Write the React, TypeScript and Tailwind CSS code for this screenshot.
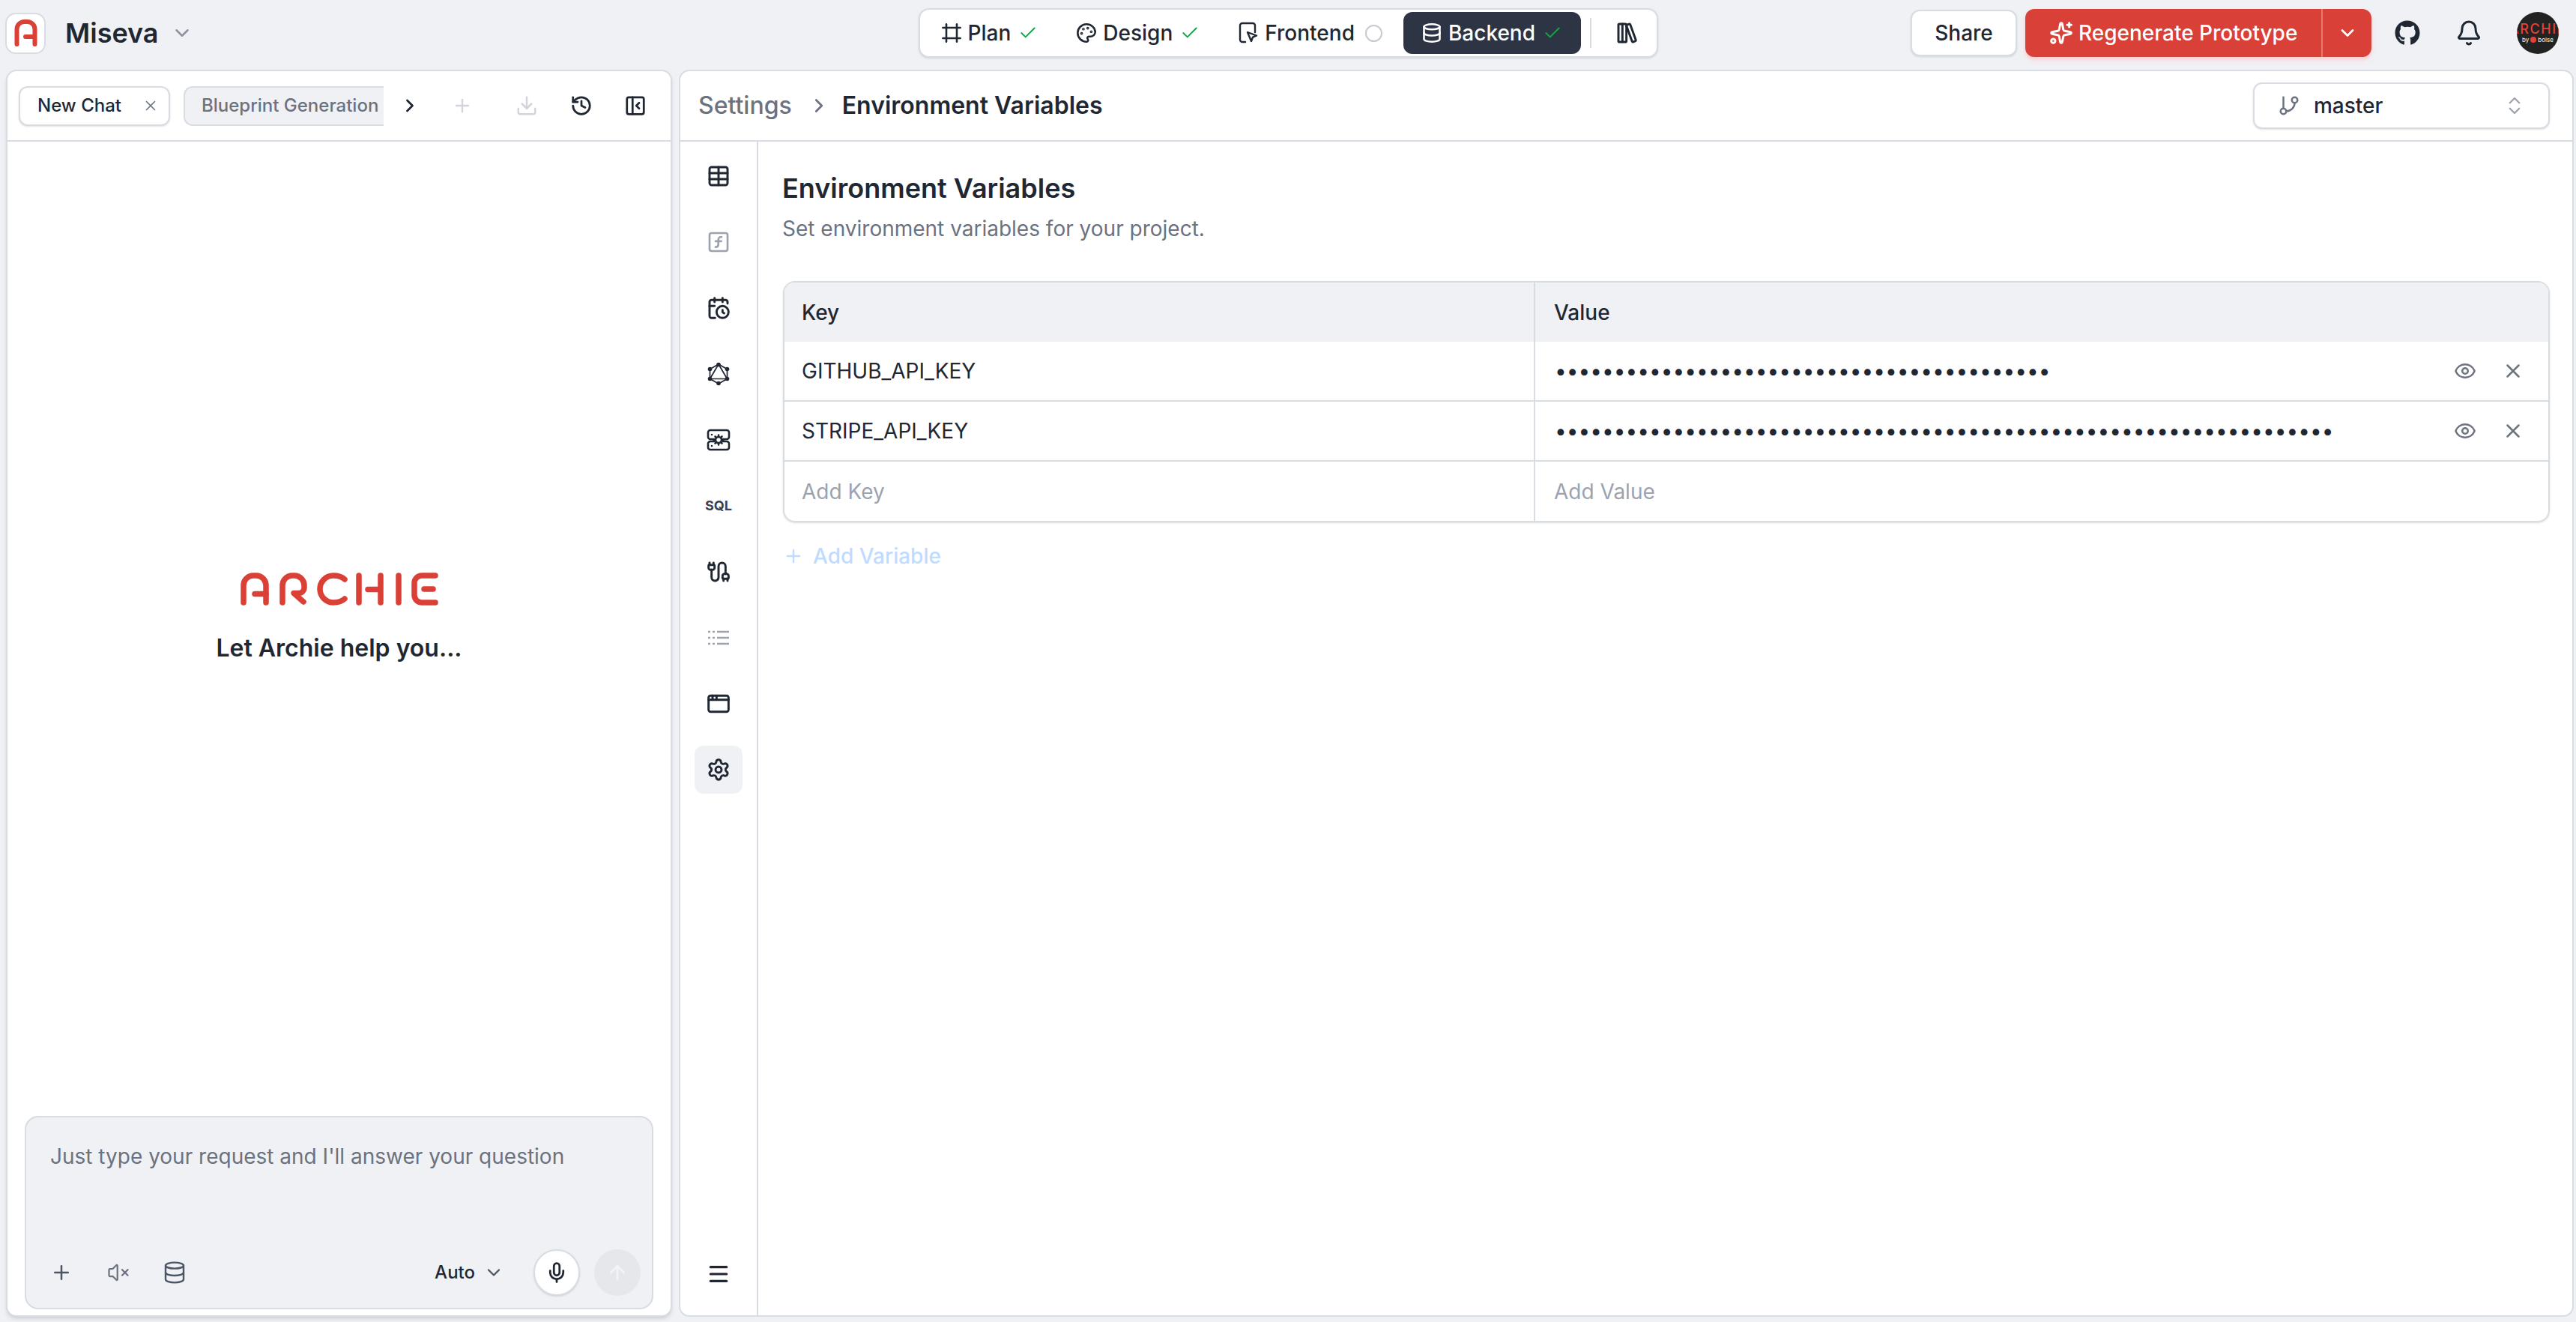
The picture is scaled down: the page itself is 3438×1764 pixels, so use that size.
import {
  AppWindow, ArrowUp, Bell, Cable, CalendarClock, Check, ChevronDown, ChevronRight, ChevronsUpDown,
  Database, Download, Eye, Frame, GitBranch, History, LibraryBig, Menu, Mic, Palette, PanelLeftClose,
  Plus, Settings, Sparkles, SquareFunction, Table, VolumeX, X,
} from 'lucide-react'
import { FaGithub } from 'react-icons/fa'

const FONT = 'font-["Inter","Liberation_Sans",sans-serif]'

function ArchieMark() {
  return (
    <svg width="31" height="36" viewBox="0 0 31 36" fill="none" stroke="#db4037" strokeWidth="6" strokeLinecap="round" strokeLinejoin="round">
      <path d="M3.5 33V13a10 10 0 0 1 10-10h4a10 10 0 0 1 10 10v20" />
      <path d="M15 23h12" />
    </svg>
  )
}

function ArchieWordmark() {
  return (
    <svg width="264" height="44" viewBox="0 0 264 44" fill="none" stroke="#db4037" strokeWidth="7.5" strokeLinecap="round" strokeLinejoin="round">
      <path d="M4 40V17A13 13 0 0 1 17 4h4a13 13 0 0 1 13 13v23" />
      <path d="M19 28.500h15" />
      <path d="M56 40V17A13 13 0 0 1 69 4h3a13 13 0 0 1 13 13v3a7.500 7.500 0 0 1-7.500 7.500H71L84 39" />
      <path d="M139 9c-4-3.500-9-5-15-5a18 18 0 0 0 0 36c6 0 11-1.500 15-5" />
      <path d="M158 4v36M187 4v36M170 22.500h17" />
      <path d="M211 4v36" />
      <path d="M260 4h-18a10 10 0 0 0-10 10v16a10 10 0 0 0 10 10h18M245 22h12" />
    </svg>
  )
}

function FrontendIcon() {
  return (
    <svg width="26" height="30" viewBox="0 0 26 30" fill="none" stroke="currentColor" strokeWidth="2.400" strokeLinecap="round" strokeLinejoin="round">
      <path d="M9 27H5a3 3 0 0 1-3-3V5a3 3 0 0 1 3-3h14a3 3 0 0 1 3 3v9" />
      <path d="m12 14 12 4.500-5 2.200-2 5.300z" />
    </svg>
  )
}

function GraphIcon() {
  return (
    <svg width="32" height="32" viewBox="0 0 32 32" fill="none" stroke="#1f2733" strokeWidth="1.700">
      <path d="M16 3 27.500 9.500v13L16 29 4.500 22.500v-13z" />
      <path d="M16 3 27.500 22.500h-23z" />
      <g fill="#1f2733" stroke="none">
        <circle cx="16" cy="3.500" r="2.800" />
        <circle cx="27.500" cy="9.500" r="2.800" />
        <circle cx="27.500" cy="22.500" r="2.800" />
        <circle cx="16" cy="28.500" r="2.800" />
        <circle cx="4.500" cy="22.500" r="2.800" />
        <circle cx="4.500" cy="9.500" r="2.800" />
      </g>
    </svg>
  )
}

function ServerGearIcon() {
  return (
    <svg width="32" height="32" viewBox="0 0 32 32" fill="none" stroke="#1f2733" strokeWidth="2.600" strokeLinecap="round" strokeLinejoin="round">
      <path d="M10 15H5a3 3 0 0 1-3-3V6a3 3 0 0 1 3-3h22a3 3 0 0 1 3 3v6a3 3 0 0 1-3 3h-5" />
      <path d="M10 18H5a3 3 0 0 0-3 3v5a3 3 0 0 0 3 3h22a3 3 0 0 0 3-3v-5a3 3 0 0 0-3-3h-5" />
      <circle cx="16" cy="16" r="4" />
      <path d="M16 9.500v2M16 20.500v2M9.500 16h2M20.500 16h2M11.500 11.500l1.500 1.500M19 19l1.500 1.500M11.500 20.500l1.500-1.500M19 13l1.500-1.500" />
      <path d="M7 9h.01M7 24h.01" />
    </svg>
  )
}

function DottedListIcon() {
  return (
    <svg width="28" height="24" viewBox="0 0 28 24" fill="none" stroke="#9ca3af" strokeWidth="2.400">
      <path d="M0 4h3M6 4h3M12 4h16M0 12h3M6 12h3M12 12h16M0 20h3M6 20h3M12 20h16" />
    </svg>
  )
}

function Step({ icon, label, done, active }: { icon: React.ReactNode; label: string; done?: boolean; active?: boolean }) {
  return (
    <div className={active ? 'flex h-[56px] w-[237px] items-center rounded-[12px] bg-[#2d3443] pl-[24px] text-white' : 'flex h-[56px] items-center text-[#1f2733]'}>
      <span className="flex w-[28px] justify-center">{icon}</span>
      <span className="ml-[8px] text-[28px] font-medium leading-none">{label}</span>
      {done ? (
        <Check size={26} strokeWidth={1.8} className="ml-[10px] text-[#16a34a]" />
      ) : (
        <span className="ml-[14px] h-[23px] w-[23px] rounded-full border-2 border-[#c7cad0]" />
      )}
    </div>
  )
}

function SideButton({ children, active }: { children: React.ReactNode; active?: boolean }) {
  return (
    <div className={active ? 'flex h-[64px] w-[64px] items-center justify-center rounded-[12px] bg-[#f0f1f5]' : 'flex h-[64px] w-[64px] items-center justify-center'}>
      {children}
    </div>
  )
}

function EnvRow({ name, dots }: { name: string; dots: number }) {
  return (
    <div className="flex h-[80px] border-b-2 border-[#d8dce3]">
      <div className="flex w-[1002px] shrink-0 items-center border-r-2 border-[#d8dce3] pl-[23px] text-[28px] text-[#1f2733]">{name}</div>
      <div className="flex min-w-0 flex-1 items-center pl-[26px] pr-[32px]">
        <span className="flex-1 whitespace-nowrap text-[28px] leading-none text-[#1f2733]">{'•'.repeat(dots)}</span>
        <Eye size={30} strokeWidth={2} className="shrink-0 text-[#6b7280]" />
        <X size={30} strokeWidth={2} className="ml-[34px] shrink-0 text-[#6b7280]" />
      </div>
    </div>
  )
}

export default function App() {
  return (
    <div className={`flex h-[1764px] w-[3438px] flex-col overflow-hidden bg-[#f0f1f5] ${FONT}`}>
      <header className="grid h-[93px] shrink-0 grid-cols-[1fr_auto_1fr] items-center pb-[5px]">
        <div className="flex items-center pl-[7px]">
          <div className="flex h-[55px] w-[54px] items-center justify-center rounded-[14px] border-2 border-[#d8dce3] bg-white">
            <ArchieMark />
          </div>
          <span className="ml-[26px] text-[36px] font-semibold text-[#1f2733]">Miseva</span>
          <ChevronDown size={30} className="ml-[16px] text-[#8b92a0]" />
        </div>

        <div className="flex h-[66px] w-[987px] items-center rounded-[14px] border-2 border-[#d8dce3] bg-white pl-[28px] shadow-sm">
          <Step icon={<Frame size={28} strokeWidth={2.2} />} label="Plan" done />
          <div className="ml-[51px]"><Step icon={<Palette size={28} strokeWidth={2.2} />} label="Design" done /></div>
          <div className="ml-[51px]"><Step icon={<FrontendIcon />} label="Frontend" /></div>
          <div className="ml-[28px]"><Step icon={<Database size={28} strokeWidth={2.2} />} label="Backend" done active /></div>
          <div className="ml-[12px] h-[40px] w-[2px] bg-[#d8dce3]" />
          <LibraryBig size={32} strokeWidth={2.2} className="ml-[32px] text-[#1f2733]" />
        </div>

        <div className="flex items-center justify-end pr-[23px]">
          <div className="flex h-[62px] w-[142px] items-center justify-center rounded-[12px] border-2 border-[#d8dce3] bg-white text-[28px] font-medium text-[#1f2733] shadow-sm">Share</div>
          <div className="ml-[11px] flex h-[64px] w-[462px] items-center rounded-[12px] bg-[#d94037] text-white shadow-md shadow-red-200">
            <div className="flex h-full w-[397px] items-center border-r-2 border-[#e67b74] pl-[32px]">
              <Sparkles size={32} strokeWidth={2.2} />
              <span className="ml-[7px] text-[28px] font-medium">Regenerate Prototype</span>
            </div>
            <div className="flex flex-1 justify-center"><ChevronDown size={28} strokeWidth={2.4} /></div>
          </div>
          <FaGithub size={34} className="ml-[31px] text-[#1f2733]" />
          <Bell size={36} strokeWidth={2} className="ml-[47px] text-[#1f2733]" />
          <div className="ml-[46px] flex h-[56px] w-[56px] flex-col items-center justify-center overflow-hidden rounded-full bg-[#222222]">
            <span className="whitespace-nowrap text-[18px] font-medium leading-[18px] tracking-[1.500px] text-[#e5413a]">ARCHIE</span>
            <span className="flex items-center whitespace-nowrap text-[8px] leading-[11px] text-white">
              by<span className="mx-[2px] h-[8px] w-[8px] rounded-full bg-[#e5413a]" />bolse
            </span>
          </div>
        </div>
      </header>

      <main className="flex min-h-0 flex-1 gap-[9px] pb-[7px] pl-[8px] pr-[3px]">
        <section className="flex w-[889px] shrink-0 flex-col rounded-[14px] border-2 border-[#d8dce3] bg-white shadow-md">
          <div className="flex h-[94px] shrink-0 items-center border-b-2 border-[#d8dce3] pl-[15px]">
            <div className="flex h-[53px] w-[202px] shrink-0 items-center rounded-[12px] border-2 border-[#d8dce3] bg-white pl-[23px] text-[24px] font-medium text-[#1f2733] shadow-sm">
              New Chat
              <X size={22} strokeWidth={1.8} className="ml-[28px] shrink-0 text-[#6b7280]" />
            </div>
            <div className="ml-[18px] flex h-[53px] w-[267px] shrink-0 items-center whitespace-nowrap rounded-l-[12px] border-y-2 border-l-2 border-[#d8dce3] bg-[#f0f1f5] pl-[22px] text-[24px] font-medium text-[#6b7280]">
              Blueprint Generation
            </div>
            <ChevronRight size={28} strokeWidth={2.4} className="ml-[21px] text-[#1f2733]" />
            <Plus size={28} strokeWidth={2} className="ml-[42px] text-[#d1d5db]" />
            <Download size={30} strokeWidth={2} className="ml-[57px] text-[#d1d5db]" />
            <History size={30} strokeWidth={2.2} className="ml-[43px] text-[#1f2733]" />
            <PanelLeftClose size={30} strokeWidth={2.2} className="ml-[42px] text-[#1f2733]" />
          </div>

          <div className="flex min-h-0 flex-1 flex-col items-center pt-[575px]">
            <ArchieWordmark />
            <p className="mt-[41px] text-[32px] font-semibold leading-none text-[#1f2733]">Let Archie help you...</p>
          </div>

          <div className="mx-[23px] mb-[8px] flex h-[258px] shrink-0 flex-col rounded-[18px] border-2 border-[#d8dce3] bg-[#f0f1f5] px-[32px]">
            <p className="pt-[34px] text-[28px] leading-[36px] text-[#6b7280]">Just type your request and I'll answer your question</p>
            <div className="mt-auto flex items-center pb-[16px]">
              <Plus size={30} strokeWidth={2} className="text-[#4b5563]" />
              <VolumeX size={30} strokeWidth={1.8} className="ml-[46px] text-[#6b7280]" />
              <Database size={32} strokeWidth={1.8} className="ml-[44px] text-[#4b5563]" />
              <span className="ml-auto text-[24px] font-medium text-[#1f2733]">Auto</span>
              <ChevronDown size={28} strokeWidth={2} className="ml-[11px] text-[#4b5563]" />
              <div className="ml-[39px] flex h-[62px] w-[62px] items-center justify-center rounded-full border-2 border-[#d8dce3] bg-white shadow-sm">
                <Mic size={30} strokeWidth={2.2} className="text-[#1f2733]" />
              </div>
              <div className="ml-[19px] mr-[-17px] flex h-[62px] w-[62px] items-center justify-center rounded-full bg-[#e5e7eb]">
                <ArrowUp size={30} strokeWidth={2} className="text-[#f3f4f6]" />
              </div>
            </div>
          </div>
        </section>

        <section className="flex min-w-0 flex-1 flex-col rounded-[14px] border-2 border-[#d8dce3] bg-white">
          <div className="flex h-[94px] shrink-0 items-center border-b-2 border-[#d8dce3] pl-[24px] pr-[30px]">
            <span className="text-[32px] font-medium text-[#6b7280]">Settings</span>
            <ChevronRight size={30} strokeWidth={2.2} className="ml-[21px] text-[#6b7280]" />
            <span className="ml-[16px] text-[32px] font-semibold text-[#1f2733]">Environment Variables</span>
            <div className="ml-auto flex h-[62px] w-[396px] items-center rounded-[12px] border-2 border-[#d8dce3] bg-white pl-[31px] pr-[30px] shadow-sm">
              <GitBranch size={30} strokeWidth={2} className="text-[#6b7280]" />
              <span className="ml-[18px] flex-1 text-[28px] font-medium text-[#1f2733]">master</span>
              <ChevronsUpDown size={30} strokeWidth={1.8} className="text-[#9ca3af]" />
            </div>
          </div>

          <div className="flex min-h-0 flex-1">
            <nav className="flex w-[104px] shrink-0 flex-col items-center gap-[24px] border-r-2 border-[#d8dce3] pb-[39px] pt-[14px]">
              <SideButton><Table size={32} strokeWidth={2.2} className="text-[#1f2733]" /></SideButton>
              <SideButton><SquareFunction size={32} strokeWidth={2} className="text-[#9ca3af]" /></SideButton>
              <SideButton><CalendarClock size={32} strokeWidth={2.2} className="text-[#1f2733]" /></SideButton>
              <SideButton><GraphIcon /></SideButton>
              <SideButton><ServerGearIcon /></SideButton>
              <SideButton><span className="text-[18px] font-bold leading-none text-[#374151]">SQL</span></SideButton>
              <SideButton><Cable size={32} strokeWidth={2.2} className="text-[#1f2733]" /></SideButton>
              <SideButton><DottedListIcon /></SideButton>
              <SideButton><AppWindow size={32} strokeWidth={2.2} className="text-[#1f2733]" /></SideButton>
              <SideButton active><Settings size={32} strokeWidth={2.2} className="text-[#1f2733]" /></SideButton>
              <div className="mt-auto"><Menu size={32} strokeWidth={2.4} className="text-[#1f2733]" /></div>
            </nav>

            <div className="min-w-0 flex-1 pl-[33px] pr-[30px]">
              <h1 className="ml-[-1px] pt-[38px] text-[36px] font-semibold leading-[48px] text-[#1f2733]">Environment Variables</h1>
              <p className="ml-[-1px] mt-[10px] text-[28px] leading-[40px] text-[#6b7280]">Set environment variables for your project.</p>

              <div className="mt-[50px] overflow-hidden rounded-[16px] border-2 border-[#d8dce3] shadow-sm">
                <div className="flex h-[79px] bg-[#f0f1f5] text-[28px] font-medium text-[#1f2733]">
                  <div className="flex w-[1002px] shrink-0 items-center border-r-2 border-[#d8dce3] pl-[23px]">Key</div>
                  <div className="flex flex-1 items-center pl-[25px]">Value</div>
                </div>
                <EnvRow name="GITHUB_API_KEY" dots={42} />
                <EnvRow name="STRIPE_API_KEY" dots={66} />
                <div className="flex h-[79px] text-[28px] text-[#9ca3af]">
                  <div className="flex w-[1002px] shrink-0 items-center border-r-2 border-[#d8dce3] pl-[23px]">Add Key</div>
                  <div className="flex flex-1 items-center pl-[25px]">Add Value</div>
                </div>
              </div>

              <div className="mt-[24px] flex items-center text-[28px] font-medium text-[#bfdbfe]">
                <Plus size={28} strokeWidth={2} />
                <span className="ml-[12px]">Add Variable</span>
              </div>
            </div>
          </div>
        </section>
      </main>
    </div>
  )
}
